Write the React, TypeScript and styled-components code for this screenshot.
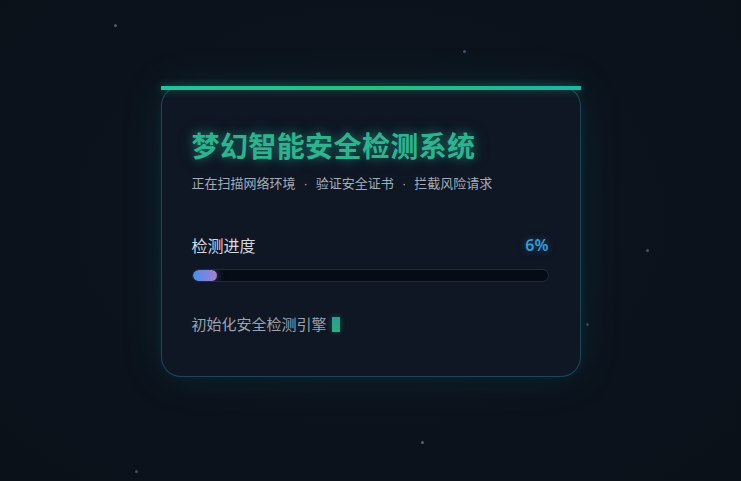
import React from "react";
import styled, { createGlobalStyle } from "styled-components";

const Global = createGlobalStyle`
  html, body { margin: 0; padding: 0; }
  body {
    background: #0b121b;
    font-family: "Noto Sans CJK SC", "Noto Sans", sans-serif;
    width: 741px;
    height: 481px;
    overflow: hidden;
  }
`;

const Page = styled.div`
  position: relative;
  width: 741px;
  height: 481px;
  display: flex;
  justify-content: center;
  align-items: flex-start;
  padding-top: 86px;
  box-sizing: border-box;
  background: radial-gradient(ellipse at 50% 45%, #0e1620 0%, #0b121b 60%, #0a1119 100%);
`;

const Star = styled.span<{ $x: number; $y: number; $o: number }>`
  position: absolute;
  left: ${(p) => p.$x}px;
  top: ${(p) => p.$y}px;
  width: 3px;
  height: 3px;
  border-radius: 50%;
  background: rgba(120, 170, 200, ${(p) => p.$o});
`;

const Card = styled.div`
  position: relative;
  width: 420px;
  height: 291px;
  box-sizing: border-box;
  border: 1px solid rgba(40, 110, 130, 0.55);
  border-radius: 20px;
  background: #0f1624;
  box-shadow: 0 0 40px rgba(20, 110, 130, 0.18), 0 0 12px rgba(20, 110, 130, 0.12);
  padding: 40px 31px 0 30px;
  display: flex;
  flex-direction: column;

  &::before {
    content: "";
    position: absolute;
    top: -1px;
    left: -1px;
    right: -1px;
    height: 4px;
    background: linear-gradient(90deg, #22c3a0 0%, #25c07a 50%, #1fb5a8 100%);
    box-shadow: 0 0 8px rgba(40, 200, 150, 0.45);
  }
`;

const Title = styled.h1`
  margin: 0;
  font-size: 28px;
  line-height: 36px;
  font-weight: 700;
  color: #2fb38e;
  letter-spacing: 0.4px;
  text-shadow: 0 0 10px rgba(45, 200, 160, 0.45), 0 0 20px rgba(45, 200, 160, 0.2);
`;

const Subtitle = styled.p`
  margin: 11px 0 0;
  font-size: 13px;
  line-height: 18px;
  color: #a3acb8;
`;

const Dot = styled.span`
  font-family: "Liberation Sans", sans-serif;
  margin: 0 8px 0 8px;
`;

const ProgressHead = styled.div`
  margin-top: 40px;
  display: flex;
  justify-content: space-between;
  align-items: center;
`;

const ProgressLabel = styled.span`
  font-size: 16px;
  line-height: 24px;
  color: #d3d9e0;
`;

const ProgressValue = styled.span`
  font-family: "Noto Sans", "Open Sans", sans-serif;
  font-size: 16px;
  line-height: 24px;
  font-weight: 600;
  color: #3a9bd9;
  text-shadow: 0 0 8px rgba(60, 150, 220, 0.45);
`;

const Track = styled.div`
  margin-top: 12px;
  height: 13px;
  border-radius: 7px;
  background: #060c16;
  border: 1px solid rgba(40, 62, 90, 0.65);
  box-sizing: border-box;
  overflow: hidden;
`;

const Fill = styled.div`
  height: 100%;
  border-radius: 7px;
  background: linear-gradient(90deg, #4a8ee6 0%, #8b82dc 70%, #a880c8 100%);
  box-shadow: 0 0 8px rgba(110, 130, 230, 0.6);
`;

const Status = styled.div`
  margin-top: 32px;
  display: flex;
  align-items: center;
  gap: 5px;
  font-size: 15px;
  line-height: 20px;
  color: #9aa3ae;
`;

const Cursor = styled.span`
  display: inline-block;
  width: 8px;
  height: 15px;
  background: linear-gradient(180deg, #2a9b95 0%, #2fae78 100%);
  box-shadow: 0 0 6px rgba(45, 180, 140, 0.4);
`;

const stars = [
  { x: 114, y: 24, o: 0.5 },
  { x: 463, y: 50, o: 0.45 },
  { x: 646, y: 249, o: 0.45 },
  { x: 586, y: 323, o: 0.35 },
  { x: 421, y: 441, o: 0.55 },
  { x: 135, y: 470, o: 0.4 },
];

export default function App() {
  const progress = 6;
  return (
    <>
      <Global />
      <Page>
        {stars.map((s, i) => (
          <Star key={i} $x={s.x} $y={s.y} $o={s.o} />
        ))}
        <Card>
          <Title>梦幻智能安全检测系统</Title>
          <Subtitle>
            正在扫描网络环境<Dot>·</Dot>验证安全证书<Dot>·</Dot>拦截风险请求
          </Subtitle>
          <ProgressHead>
            <ProgressLabel>检测进度</ProgressLabel>
            <ProgressValue>{progress}%</ProgressValue>
          </ProgressHead>
          <Track>
            <Fill style={{ width: `${Math.max(progress, 6.8)}%` }} />
          </Track>
          <Status>
            初始化安全检测引擎
            <Cursor />
          </Status>
        </Card>
      </Page>
    </>
  );
}
